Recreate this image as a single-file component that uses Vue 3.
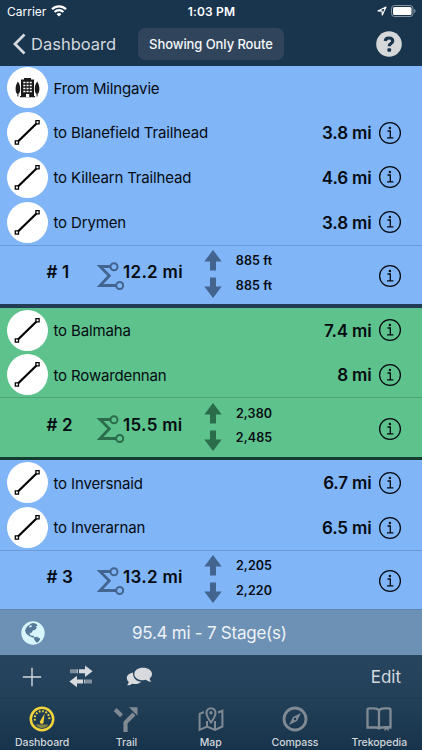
<script setup>
import { ref } from "vue";

const stages = ref([
  {
    id: 1,
    color: "blue",
    start: "From Milngavie",
    legs: [
      { name: "to Blanefield Trailhead", distance: "3.8 mi" },
      { name: "to Killearn Trailhead", distance: "4.6 mi" },
      { name: "to Drymen", distance: "3.8 mi" },
    ],
    total: "12.2 mi",
    up: "885 ft",
    down: "885 ft",
  },
  {
    id: 2,
    color: "green",
    legs: [
      { name: "to Balmaha", distance: "7.4 mi" },
      { name: "to Rowardennan", distance: "8 mi" },
    ],
    total: "15.5 mi",
    up: "2,380",
    down: "2,485",
  },
  {
    id: 3,
    color: "blue",
    legs: [
      { name: "to Inversnaid", distance: "6.7 mi" },
      { name: "to Inverarnan", distance: "6.5 mi" },
    ],
    total: "13.2 mi",
    up: "2,205",
    down: "2,220",
  },
]);

const tabs = ["Dashboard", "Trail", "Map", "Compass", "Trekopedia"];
const activeTab = ref("Dashboard");
</script>

<template>
  <div class="app">
    <header>
      <div class="status">
        <div class="carrier">
          <span>Carrier</span>
          <svg width="16" height="12" viewBox="0 0 16 12">
            <g fill="none" stroke="#fff" stroke-width="2.1">
              <path d="M1 4.2a10 10 0 0 1 14 0" />
              <path d="M3.6 7a6.2 6.2 0 0 1 8.8 0" />
            </g>
            <path d="M8 11.6 5.6 9.2a3.4 3.4 0 0 1 4.8 0z" fill="#fff" />
          </svg>
        </div>
        <strong>1:03 PM</strong>
        <div class="battery">
          <svg width="10" height="10" viewBox="0 0 10 10">
            <path d="M.9 4.9 9 1 5.3 9.1 5 5.1z" fill="none" stroke="#fff" stroke-width="1.1" stroke-linejoin="round" />
          </svg>
          <svg width="25" height="12" viewBox="0 0 25 12">
            <rect x=".5" y=".5" width="21.5" height="11" rx="3" fill="none" stroke="#8796a4" />
            <rect x="2" y="2" width="18.5" height="8" rx="1.5" fill="#fff" />
            <path d="M23.2 4v4q1.3-.6 1.3-2t-1.3-2z" fill="#8796a4" />
          </svg>
        </div>
      </div>
      <nav>
        <button class="back">
          <svg width="13" height="22" viewBox="0 0 13 22">
            <path d="M11.5 1.5 2 11l9.5 9.5" fill="none" stroke="#d5d9dd" stroke-width="2.8" />
          </svg>
          <span>Dashboard</span>
        </button>
        <button class="filter"><span>Showing Only Route</span></button>
        <button class="help">
          <svg width="26" height="26" viewBox="0 0 26 26">
            <circle cx="13" cy="13" r="12.8" fill="#d6d7d8" />
            <path d="M9.3 10c.2-2.2 1.6-3 3.6-3 2.2 0 3.8 1 3.8 2.9 0 2.8-3.5 2.5-3.5 5.3" fill="none" stroke="#19344d" stroke-width="3.2" />
            <rect x="11.4" y="17.2" width="3.7" height="3.5" rx="1" fill="#19344d" />
          </svg>
        </button>
      </nav>
    </header>

    <main>
      <section v-for="stage in stages" :key="stage.id" :class="['stage', stage.color]">
        <div v-if="stage.start" class="row">
          <span class="round">
            <svg width="41" height="41" viewBox="0 0 41 41">
              <g fill="#1b1b1b">
                <path d="M14 12.5h3V11h7v1.5h3V29h1v1.2H13V29h1z" />
                <path d="M10.9 14.5c1.6 2 2.3 5 2.3 7.5s-.7 4.5-1.8 5v2.5h-1V27c-1.2-.6-1.8-2.5-1.8-5s.8-5.5 2.3-7.5zM30.1 14.5c1.6 2 2.3 5 2.3 7.5s-.7 4.5-1.8 5v2.5h-1V27c-1.2-.6-1.8-2.5-1.8-5s.8-5.5 2.3-7.5z" />
              </g>
              <path d="M16.3 15.5h2.1M19.5 15.5h2.1M22.7 15.5h2.1M16.3 18.5h2.1M19.5 18.5h2.1M22.7 18.5h2.1M16.3 21.5h2.1M19.5 21.5h2.1M22.7 21.5h2.1M16.3 24.5h2.1M19.5 24.5h2.1M22.7 24.5h2.1" stroke="#fff" stroke-width="1.6" />
              <path d="M19 27h3.2v3H19z" fill="#fff" />
            </svg>
          </span>
          <span class="name">{{ stage.start }}</span>
        </div>
        <div v-for="leg in stage.legs" :key="leg.name" class="row">
          <span class="round">
            <svg width="41" height="41" viewBox="0 0 41 41">
              <path d="M11 29.5 29.5 11.5" stroke="#000" stroke-width="2.2" />
              <path d="M8.3 28.9h3.2v3.2H8.3zM28.9 8.7h3.2v3.2h-3.2z" fill="#fff" stroke="#000" stroke-width="1.3" />
            </svg>
          </span>
          <span class="name">{{ leg.name }}</span>
          <span class="distance">{{ leg.distance }}</span>
          <svg class="info" width="24" height="24" viewBox="0 0 24 24">
            <circle cx="12" cy="12" r="10.4" fill="none" stroke="currentColor" stroke-width="1.3" />
            <path d="M9.5 10h2.8v6.8M9 16.9h6.4" fill="none" stroke="currentColor" stroke-width="1.3" />
            <circle cx="11.9" cy="7" r="1.2" fill="currentColor" />
          </svg>
        </div>
        <div class="summary">
          <b class="number"># {{ stage.id }}</b>
          <svg class="sigma" width="29" height="30" viewBox="0 0 29 30">
            <g fill="none" stroke="currentColor">
              <path d="M15.5 6.5H5l9.3 9.2L5 25.5h16" stroke-width="2.8" />
              <circle cx="19" cy="6.7" r="3.5" stroke-width="2" />
              <circle cx="24.7" cy="25.5" r="3.5" stroke-width="2" />
            </g>
          </svg>
          <b class="total">{{ stage.total }}</b>
          <svg class="arrows" width="18" height="48" viewBox="0 0 18 48">
            <path d="M9 0l8.7 11.5H12V20.5H6V11.500H.3zM6 27.5h6v9h5.700L9 48 .3 36.500H6z" fill="currentColor" />
          </svg>
          <div class="climb">
            <span>{{ stage.up }}</span>
            <span>{{ stage.down }}</span>
          </div>
          <svg class="info" width="24" height="24" viewBox="0 0 24 24">
            <circle cx="12" cy="12" r="10.4" fill="none" stroke="currentColor" stroke-width="1.3" />
            <path d="M9.5 10h2.8v6.8M9 16.9h6.4" fill="none" stroke="currentColor" stroke-width="1.3" />
            <circle cx="11.9" cy="7" r="1.2" fill="currentColor" />
          </svg>
        </div>
      </section>
    </main>

    <div class="route">
      <svg width="24" height="24" viewBox="0 0 24 24">
        <circle cx="12" cy="12" r="11.7" fill="#d9f5fc" />
        <path d="M10 2.5 12.5 2l3 1 1.2 2-2.2.3 1.5 1.5-2.2 2.2-2 .6-1 2-2.5 1.2 1.5 1.8 3.4.4-1 1.7-3.6-1.4-3.4-2.5L4 9.5l2-4zM12.5 16.6l3.2-.8 3.7 2-1.8 3-2 1-2-2.6z" fill="#557a99" />
        <path d="m8 5 2.3-1 .6 1.5-2 1.3z" fill="#d9f5fc" />
      </svg>
      <span>95.4 mi - 7 Stage(s)</span>
    </div>

    <footer>
      <div class="toolbar">
        <svg width="20" height="20" viewBox="0 0 20 20">
          <path d="M10 .8v18.4M.8 10h18.4" stroke="#d4d8dc" stroke-width="1.4" />
        </svg>
        <svg class="swap" width="24" height="24" viewBox="0 0 24 24">
          <g fill="#d8dadd">
            <path d="M10 4.2h6V.5l7.6 5.700L16 12V8.200h-6zM14 14.400H8v-3.700L.4 16.500 8 22.300v-3.900h6z" />
            <path d="M1.5 4.2h1v4h-1zM3.5 4.2h1v4h-1zM5.5 4.2h1v4h-1zM7.5 4.2h1.3v4H7.5zM15.2 14.4h1.3v4h-1.3zM17.5 14.4h1v4h-1zM19.5 14.4h1v4h-1zM21.5 14.4h1v4h-1z" />
          </g>
        </svg>
        <svg class="chat" width="27" height="20" viewBox="0 0 27 20">
          <g fill="#d8dadd">
            <path d="M7 5.6C3.300 6.500.8 8.400.8 11c0 1.500.7 2.900 1.900 4-.2 1.400-.9 2.500-1.800 3.300 2 .1 3.800-.6 5.200-1.600 3.200.9 6.900.3 9.200-1.900C10.600 14.400 6.800 11.500 7 5.600z" />
            <path d="M17 .7c-5 0-8.700 2.700-8.700 6.200s3.700 6.300 8.700 6.300c1 0 2-.1 2.900-.4 1.500 1.200 3.300 2 5.700 1.900-1.100-.8-1.700-2-2-3.300 1.500-1.200 2.400-2.700 2.400-4.500C26 3.400 22 .7 17 .7z" />
          </g>
        </svg>
        <span class="edit">Edit</span>
      </div>
      <div class="tabs">
        <button v-for="tab in tabs" :key="tab" :class="{ active: tab === activeTab }" @click="activeTab = tab">
          <svg v-if="tab === 'Dashboard'" width="26" height="26" viewBox="0 0 26 26">
            <circle cx="13" cy="13" r="11.2" fill="none" stroke="currentColor" stroke-width="2.5" />
            <path d="M6 14.5a7.3 7.3 0 1 1 14 0" fill="none" stroke="currentColor" stroke-width="2" stroke-dasharray="1.7 1.7" />
            <path d="m15.6 7.5-1 8.2a1.9 1.9 0 1 1-3.2-1z" fill="currentColor" />
            <path d="M6.5 18.5h13q-2.5 3.6-6.5 3.600t-6.500-3.600z" fill="currentColor" opacity=".5" />
          </svg>
          <svg v-else-if="tab === 'Trail'" width="26" height="26" viewBox="0 0 26 26">
            <path d="M12.5 26V16.5L21 8M2.2 3.6l6.3 6.2" fill="none" stroke="currentColor" stroke-width="4.2" />
            <path d="M16 1.2h8.5v8.5z" fill="currentColor" />
          </svg>
          <svg v-else-if="tab === 'Map'" width="26" height="26" viewBox="0 0 26 26">
            <path d="M6 6 1.6 7.8v16L9 20.5l8 3.5 7.4-3.5V4.7L20 6.5M9 15v5.5M17 15v9" fill="none" stroke="currentColor" stroke-width="2" />
            <path d="M13 16.5C10.5 13 8.5 10.3 8.5 6.7a4.5 4.5 0 0 1 9 0c0 3.6-2 6.3-4.5 9.8z" fill="none" stroke="currentColor" stroke-width="2" />
            <circle cx="13" cy="6.7" r="1.7" fill="currentColor" />
          </svg>
          <svg v-else-if="tab === 'Compass'" width="26" height="26" viewBox="0 0 26 26">
            <circle cx="13" cy="13" r="11" fill="none" stroke="currentColor" stroke-width="2.8" />
            <path fill-rule="evenodd" d="m19 7-4 8-8 4 4-8zm-6 4.7a1.3 1.3 0 1 0 0 2.6 1.3 1.3 0 0 0 0-2.6z" fill="currentColor" />
          </svg>
          <svg v-else width="26" height="26" viewBox="0 0 26 26">
            <path d="M13 4.2Q11 2.3 8 2.3H3.2Q1.5 2.3 1.5 4v17.5H10q2 0 3 1 1-1 3-1h8.5V4q0-1.700-1.700-1.700H18q-3 0-5 1.900zm0 0v17.500" fill="none" stroke="currentColor" stroke-width="2.3" />
            <path d="M18.5 20h4.2v5.2l-2.1-1.9-2.1 1.9z" fill="currentColor" />
          </svg>
          <span>{{ tab }}</span>
        </button>
      </div>
    </footer>
  </div>
</template>

<style>
body {
  margin: 0;
  background: #19344d;
}
</style>

<style scoped>
.app {
  width: 422px;
  height: 750px;
  display: flex;
  flex-direction: column;
  overflow: hidden;
  font-family: Inter, "Liberation Sans", sans-serif;
  color: #050b12;
  background: #19344d;
}

svg {
  display: block;
  flex: none;
}

span,
b,
strong {
  white-space: nowrap;
}

button {
  padding: 0;
  border: none;
  background: none;
  font: inherit;
  color: inherit;
}

header {
  height: 65.5px;
  flex: none;
}

.status {
  height: 22px;
  display: grid;
  grid-template-columns: 1fr auto 1fr;
  align-items: center;
  padding: 0 6px 0 7px;
  color: #fff;
  font-size: 12px;
}

.status strong {
  font-weight: 600;
  letter-spacing: 0.15px;
}

.carrier,
.battery {
  display: flex;
  align-items: center;
  gap: 5px;
}

.battery {
  justify-content: flex-end;
  gap: 4px;
}

nav {
  height: 43px;
  display: flex;
  align-items: center;
  padding: 0 20px 0 13px;
}

.back {
  display: flex;
  align-items: center;
  gap: 5px;
  width: 125px;
  color: #d5d9dd;
  font-size: 16.5px;
}

.filter {
  width: 146px;
  height: 32px;
  border-radius: 7px;
  background: #30455c;
  color: #f5f7f9;
  font-size: 13px;
  font-weight: 500;
  letter-spacing: -0.08px;
}

.help {
  margin-left: auto;
}

.stage.blue {
  background: #80b5f8;
}

.stage.green {
  background: #5dc28c;
}

/* dark divider between two stages */
.stage + .stage::before {
  content: "";
  display: block;
  height: 3.7px;
  background: #223c56;
}

.green + .stage::before {
  background: #143c30;
}

.row {
  height: 44.8px;
  display: flex;
  align-items: center;
  padding: 0 20.5px 0 6.5px;
}

.round {
  width: 41px;
  height: 41px;
  border-radius: 50%;
  background: #fff;
}

.name {
  margin: 0.6px 0 0 6px;
  font-size: 15px;
  letter-spacing: -0.15px;
}

.distance {
  margin-left: auto;
  margin-right: 6px;
  padding-top: 1px;
  font-size: 17px;
  font-weight: 600;
  letter-spacing: -0.15px;
}

.summary {
  height: 59.4px;
  box-sizing: border-box;
  display: flex;
  align-items: center;
  padding-right: 20.5px;
  border-top: 1px solid #6c9bd7;
}

.green .summary {
  border-top-color: #4da377;
}

.number {
  width: 48.5px;
  margin: 0 0 6px 46.5px;
  font-size: 17px;
  font-weight: 600;
  letter-spacing: 0.2px;
}

.total {
  width: 80.5px;
  margin: 0 0 6px -1px;
  font-size: 17px;
  font-weight: 600;
  letter-spacing: 0.3px;
}

.arrows {
  margin-bottom: 2px;
}

.sigma,
.arrows {
  color: #42648e;
}

.green .sigma,
.green .arrows {
  color: #2b6c4b;
}

.climb {
  width: 54px;
  display: flex;
  flex-direction: column;
  align-items: center;
  gap: 8.5px;
  margin: 0 0 3px 5.5px;
  line-height: 16px;
  font-size: 12.5px;
  font-weight: 600;
  letter-spacing: 0.1px;
}

.summary .info {
  margin: 2px 0 0 auto;
}

.route {
  height: 45.5px;
  flex: none;
  box-sizing: border-box;
  display: flex;
  align-items: center;
  padding-left: 21px;
  border-top: 1px solid #5e86b2;
  background: #6d91b5;
  color: #edf2f7;
  font-size: 17px;
}

.route span {
  margin: 1px 0 0 87px;
  letter-spacing: -0.25px;
}

footer {
  flex: 1;
  background: linear-gradient(#27455f, #234059 46%, #17334c);
}

.toolbar {
  height: 44px;
  box-sizing: border-box;
  display: flex;
  align-items: center;
  padding: 2px 21px 0 22px;
  border-bottom: 1px solid #1e3b54;
  color: #d4d8dc;
  font-size: 17px;
}

.swap {
  margin-left: 27px;
}

.chat {
  margin-left: 33px;
}

.edit {
  margin-left: auto;
}

.tabs {
  display: grid;
  grid-template-columns: repeat(5, 84.3px);
  padding-top: 7px;
}

.tabs button {
  display: flex;
  flex-direction: column;
  align-items: center;
  gap: 4px;
  color: #818a93;
}

.tabs .active {
  color: #f2d43b;
}

.tabs span {
  color: #d2d6da;
  font-size: 10.5px;
  font-weight: 500;
  line-height: 13px;
  letter-spacing: -0.05px;
}
</style>
